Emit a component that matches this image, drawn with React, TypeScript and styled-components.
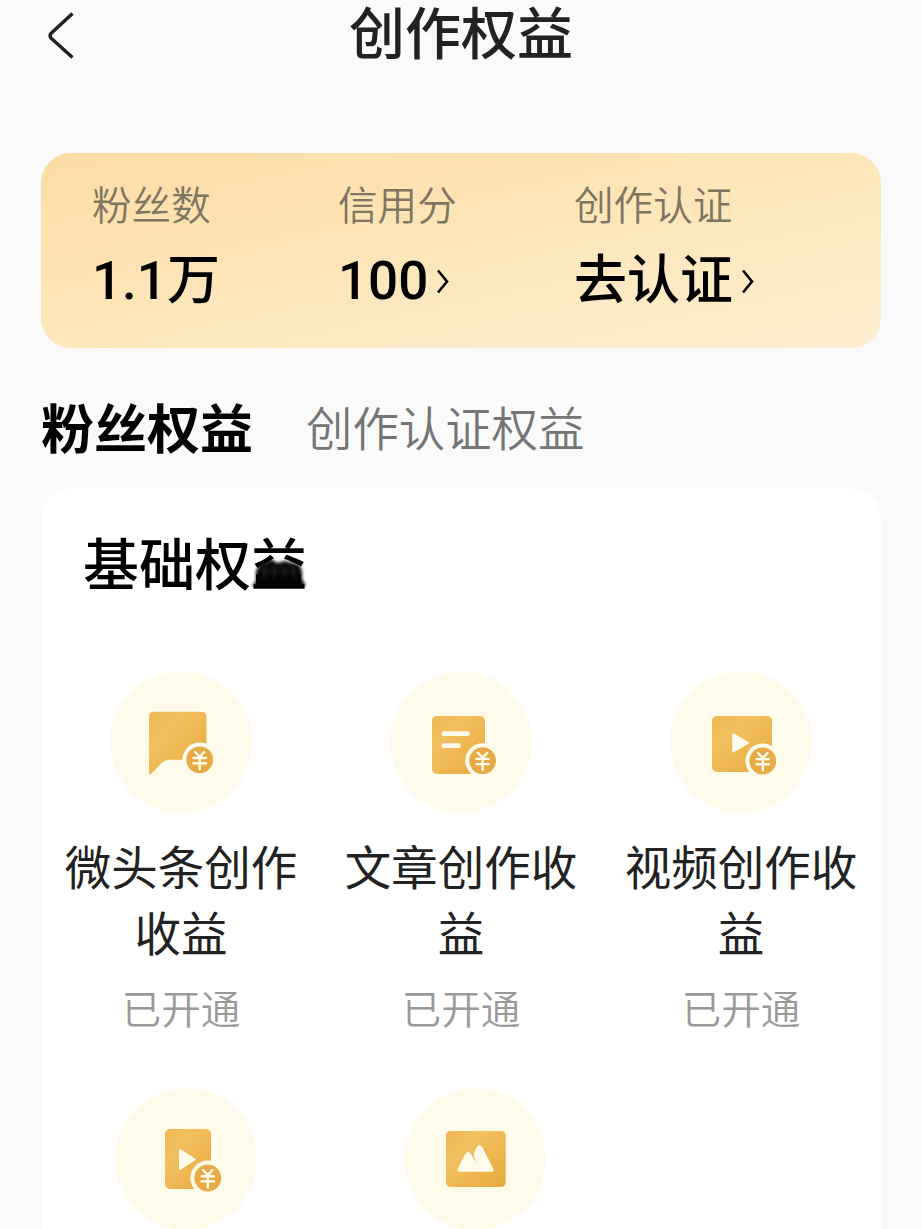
import React from "react";
import styled, { createGlobalStyle } from "styled-components";

const cjk = `"Noto Sans CJK SC", sans-serif`;

const GlobalStyle = createGlobalStyle`
  * { box-sizing: border-box; }
  body {
    margin: 0;
    background: #fafafa;
    font-family: ${cjk};
    overflow: hidden;
  }
`;

const Page = styled.main`
  height: 1229px;
  overflow: hidden;
  padding: 0 41px;
  display: flex;
  flex-direction: column;
  background: #fafafa;
`;

const Header = styled.header`
  display: grid;
  grid-template-columns: 60px 1fr 60px;
  height: 153px;
  align-items: start;
  flex: none;
`;

const BackButton = styled.button`
  border: 0;
  padding: 10px 0 0 6px;
  background: none;
  line-height: 0;
  text-align: left;
`;

const Title = styled.h1`
  margin: 0;
  text-align: center;
  font-size: 56px;
  line-height: 60px;
  font-weight: 500;
  color: #222;
`;

const Summary = styled.section`
  flex: none;
  display: grid;
  grid-template-columns: 246px 236px 1fr;
  height: 195px;
  padding: 29px 0 0 51px;
  border-radius: 30px;
  background: linear-gradient(168deg, #fcdca4 0%, #fde5b8 45%, #feeed0 100%);
`;

const StatLabel = styled.div`
  font-size: 39.6px;
  line-height: 42px;
  font-weight: 350;
  color: #807462;
`;

const StatValue = styled.div`
  display: flex;
  align-items: center;
  gap: 8px;
  margin-top: 27px;
  font-family: Roboto, ${cjk};
  font-size: 53px;
  line-height: 60px;
  font-weight: 500;
  color: #000;
  white-space: nowrap;
`;

const Tabs = styled.nav`
  flex: none;
  display: flex;
  align-items: center;
  gap: 53px;
  height: 133px;
  padding-top: 24px;
  border-bottom: 2px solid #f5f5f5;
`;

const Tab = styled.span<{ $active?: boolean }>`
  font-size: ${(p) => (p.$active ? 53 : 46.4)}px;
  line-height: 60px;
  font-weight: ${(p) => (p.$active ? 700 : 350)};
  color: ${(p) => (p.$active ? "#000" : "#757575")};
`;

const Card = styled.section`
  flex: none;
  height: 800px;
  margin-top: 8px;
  padding-top: 38px;
  border-radius: 30px;
  background: #fff;
`;

const CardTitle = styled.h2`
  position: relative;
  width: max-content;
  margin: 0 0 0 42px;
  font-size: 56px;
  line-height: 68px;
  font-weight: 500;
  color: #000;
`;

const Smudge = styled.svg`
  position: absolute;
  left: 164px;
  top: 17px;
`;

const Row = styled.div<{ $columns: string; $top: number; $inset?: number }>`
  display: grid;
  grid-template-columns: ${(p) => p.$columns};
  margin-top: ${(p) => p.$top}px;
  padding-left: ${(p) => p.$inset ?? 0}px;
`;

const Item = styled.div`
  display: flex;
  flex-direction: column;
  align-items: center;
`;

const ItemName = styled.div`
  width: 240px;
  margin-top: 19px;
  text-align: center;
  font-size: 46.5px;
  line-height: 66px;
  color: #222;
`;

const ItemStatus = styled.div`
  margin-top: 18px;
  font-size: 39.5px;
  line-height: 50px;
  font-weight: 350;
  color: #999;
`;

const IconCircle = styled.div`
  width: 142px;
  height: 142px;
  border-radius: 50%;
  background: #fffbeb;
`;

const CREAM = "#fffbeb";

const Chevron = () => (
  <svg width="14" height="26" viewBox="0 0 14 26" fill="none">
    <path d="M2 2.5 11 13.5 2 24.5" stroke="#000" strokeWidth="2.6" />
  </svg>
);

const Coin = ({ x, y }: { x: number; y: number }) => (
  <g transform={`translate(${x} ${y})`}>
    <circle r="17.4" fill={CREAM} />
    <circle r="13.4" fill="#e6ab45" />
    <path
      d="M-4.6-7.8 0-3 4.6-7.8M0-3V9.4M-6.2-1.8H6.2M-6.2 3.4H6.2"
      stroke={CREAM}
      strokeWidth="2.4"
      strokeLinecap="round"
      fill="none"
    />
  </g>
);

type Kind = "post" | "article" | "video" | "short" | "image";

const BenefitIcon = ({ kind }: { kind: Kind }) => {
  const fill = `url(#gold-${kind})`;
  return (
    <IconCircle>
      <svg width="142" height="142" viewBox="0 0 142 142">
        <defs>
          <linearGradient id={`gold-${kind}`} x1="0" y1="0" x2="1" y2="1">
            <stop offset="0" stopColor="#edb650" />
            <stop offset="0.3" stopColor="#f3c060" />
            <stop offset="1" stopColor="#e6a93c" />
          </linearGradient>
        </defs>
        {kind === "post" && (
          <>
            <path
              d="M44 40.7H91.5Q96.5 40.7 96.5 46V88.7H60Q55.5 88.7 52 91.5L41.5 102.5Q39 104.5 39 101V46Q39 40.7 44 40.7Z"
              fill={fill}
            />
            <Coin x={89.7} y={88.8} />
          </>
        )}
        {kind === "article" && (
          <>
            <rect x="42" y="45" width="53" height="58" rx="5" fill={fill} />
            <path d="M54 62.7H77.5M54 74.7H68.5" stroke={CREAM} strokeWidth="4.8" strokeLinecap="round" />
            <Coin x={92.6} y={89.7} />
          </>
        )}
        {kind === "video" && (
          <>
            <rect x="42" y="45" width="60" height="56" rx="5" fill={fill} />
            <path d="M63.2 63.2V80.4L78 71.8Z" fill={CREAM} stroke={CREAM} strokeWidth="2" strokeLinejoin="round" />
            <Coin x={92.8} y={89.9} />
          </>
        )}
        {kind === "short" && (
          <>
            <rect x="50" y="41" width="46" height="60" rx="5" fill={fill} />
            <path d="M65 62.2V81L79.7 71.5Z" fill={CREAM} stroke={CREAM} strokeWidth="2" strokeLinejoin="round" />
            <Coin x={92.8} y={90} />
          </>
        )}
        {kind === "image" && (
          <>
            <rect x="42" y="43" width="59.7" height="56" rx="4.5" fill={fill} />
            <path
              d="M53.8 80.5 61 66.5Q63.7 62 67 66L72.8 75.8 69.6 66.5 72.3 60Q74.8 54.5 78 58.8L89.3 80.5Q90.6 83.8 87.5 83.8H56Q52.6 83.8 53.8 80.5Z"
              fill={CREAM}
            />
          </>
        )}
      </svg>
    </IconCircle>
  );
};

const benefits: { kind: Kind; lines: [string, string] }[] = [
  { kind: "post", lines: ["微头条创作", "收益"] },
  { kind: "article", lines: ["文章创作收", "益"] },
  { kind: "video", lines: ["视频创作收", "益"] },
];

const stats = [
  { label: "粉丝数", value: "1.1万", link: false },
  { label: "信用分", value: "100", link: true },
  { label: "创作认证", value: "去认证", link: true },
];

export default function App() {
  return (
    <>
      <GlobalStyle />
      <Page>
        <Header>
          <BackButton aria-label="返回">
            <svg width="30" height="52" viewBox="0 0 30 52" fill="none">
              <path
                d="M25.5 3.5 4.2 23.2Q2 25.8 4.2 28.2L25.5 47.5"
                stroke="#222"
                strokeWidth="3.5"
                strokeLinejoin="round"
              />
            </svg>
          </BackButton>
          <Title>创作权益</Title>
        </Header>
        <Summary>
          {stats.map((s) => (
            <div key={s.label}>
              <StatLabel>{s.label}</StatLabel>
              <StatValue>
                {s.value}
                {s.link && <Chevron />}
              </StatValue>
            </div>
          ))}
        </Summary>
        <Tabs>
          <Tab $active>粉丝权益</Tab>
          <Tab>创作认证权益</Tab>
        </Tabs>
        <Card>
          <CardTitle>
            基础权益
            <Smudge width="70" height="50" viewBox="0 0 70 50">
              <defs>
                <filter id="soft" x="-20%" y="-20%" width="140%" height="140%">
                  <feGaussianBlur stdDeviation="1.5" />
                </filter>
              </defs>
              <path
                d="M9 27Q12 20 19 18L24 15 30 19 38 17 46 19 52 21Q56 25 55 35L59 42H5L9 37Z"
                fill="#0a0a0a"
                filter="url(#soft)"
              />
              <path d="M9 30H54V43H9Z" fill="#050505" />
              <path
                d="M18 24 17 34M28 23 27 34M37 23 38 33M46 24 47 34"
                stroke="#2c2c2c"
                strokeWidth="1.6"
                filter="url(#soft)"
              />
            </Smudge>
          </CardTitle>
          <Row $columns="280px 280px 280px" $top={76}>
            {benefits.map((b) => (
              <Item key={b.kind}>
                <BenefitIcon kind={b.kind} />
                <ItemName>
                  {b.lines[0]}
                  <br />
                  {b.lines[1]}
                </ItemName>
                <ItemStatus>已开通</ItemStatus>
              </Item>
            ))}
          </Row>
          <Row $columns="289px 289px" $top={56} $inset={0.5}>
            <Item>
              <BenefitIcon kind="short" />
            </Item>
            <Item>
              <BenefitIcon kind="image" />
            </Item>
          </Row>
        </Card>
      </Page>
    </>
  );
}
